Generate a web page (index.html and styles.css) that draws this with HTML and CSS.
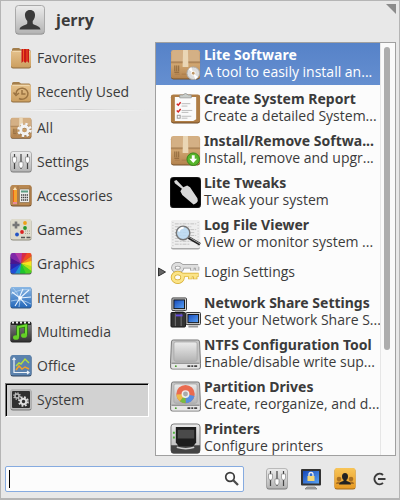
FILE: index.html
```html
<!DOCTYPE html>
<html lang="en">
<head>
<meta charset="utf-8">
<title>Applications</title>
<link rel="stylesheet" href="styles.css">
</head>
<body>
<svg class="defs" aria-hidden="true">
  <defs>
    <linearGradient id="silver" x1="0" y1="0" x2="0" y2="1"><stop offset="0" stop-color="#ececec"/><stop offset="1" stop-color="#b4b4b4"/></linearGradient>
    <linearGradient id="tan" x1="0" y1="0" x2="0" y2="1"><stop offset="0" stop-color="#e5c28d"/><stop offset="1" stop-color="#cc9f60"/></linearGradient>
    <linearGradient id="box" x1="0" y1="0" x2="0" y2="1"><stop offset="0" stop-color="#d5b083"/><stop offset=".45" stop-color="#c29461"/><stop offset=".5" stop-color="#d0a671"/><stop offset="1" stop-color="#b3824d"/></linearGradient>
    <linearGradient id="blue" x1="0" y1="0" x2="1" y2="1"><stop offset="0" stop-color="#1648b8"/><stop offset="1" stop-color="#5aa3f5"/></linearGradient>
    <linearGradient id="sky" x1="0" y1="0" x2="0" y2="1"><stop offset="0" stop-color="#8ab7e4"/><stop offset="1" stop-color="#2569bb"/></linearGradient>
    <linearGradient id="dark" x1="0" y1="0" x2="0" y2="1"><stop offset="0" stop-color="#777"/><stop offset="1" stop-color="#333"/></linearGradient>
    <linearGradient id="orange" x1="0" y1="0" x2="0" y2="1"><stop offset="0" stop-color="#f8c558"/><stop offset="1" stop-color="#e79a23"/></linearGradient>
    <symbol id="folder" viewBox="0 0 22 22">
      <path d="M2 4V2.500Q2 1 3.500 1H9l2 1.500h8q1.500 0 1.500 1.500v3H2z" fill="#a37e4c"/>
      <rect x="1" y="4" width="20" height="17.500" rx="2" fill="#8d6b3d"/>
      <rect x="1" y="3.500" width="20" height="17" rx="2" fill="url(#tan)"/>
      <path d="M2.500 4.500h17" stroke="#f0d7ac"/>
    </symbol>
    <symbol id="mixer" viewBox="0 0 22 22">
      <rect x=".5" y="1" width="21" height="20.500" rx="2.500" fill="#777"/>
      <rect x=".5" y=".5" width="21" height="20" rx="2.500" fill="url(#silver)" stroke="#999" stroke-width=".6"/>
      <path d="M4.500 3v15M11 3v15M17.500 3v15" stroke="#444" stroke-width="1.200"/>
      <path d="M2.500 6h4v4l-1 2h-2l-1-2zM9 11h4v4l-1 2h-2l-1-2zM15.500 6h4v4l-1 2h-2l-1-2z" fill="#fff" stroke="#777" stroke-width=".6"/>
    </symbol>
    <symbol id="carton" viewBox="0 0 32 32">
      <rect x="1" y="2" width="30" height="29.500" rx="2.500" fill="#74522c"/>
      <rect x="1" y="1" width="30" height="29.500" rx="2.500" fill="url(#box)"/>
      <path d="M2.500 2h27l1.500 12H1z" fill="#d4b085"/>
      <path d="M1 13.500h30" stroke="#9a7144"/>
      <path d="M13.500 1h5l.5 17.500h-6z" fill="#ead6b5"/>
      <path d="M5 17v6M7 17v6M9 17v6M4.500 24h5" stroke="#8a6338"/>
      <path d="M5 26h5M12 26h5" stroke="#aa7b49"/>
    </symbol>
    <symbol id="drive" viewBox="0 0 32 32">
      <path d="M3.500 1h25q2 0 2 2l1 22v4q0 2-2 2h-27q-2 0-2-2v-4l1-22q0-2 2-2z" fill="#c5c5c5" stroke="#777"/>
      <rect x="4" y="3" width="24" height="20" rx="2" fill="url(#silver)" stroke="#aaa"/>
      <path d="M1.500 25h29v4q0 1.500-1.500 1.500H3q-1.500 0-1.500-1.500z" fill="#e7e7e7"/>
      <path d="M1.500 25h29" stroke="#777"/>
      <path d="M18 28h3M22 28h2M25 28h3" stroke="#444" stroke-width="2"/>
      <circle cx="6" cy="28" r="1" fill="#4ca032"/>
    </symbol>
    <symbol id="gear" viewBox="0 0 16 16">
      <circle cx="8" cy="8" r="4" fill="none" stroke="currentColor" stroke-width="3"/>
      <circle cx="8" cy="8" r="6.300" fill="none" stroke="currentColor" stroke-width="3" stroke-dasharray="2.600 2.350"/>
    </symbol>
  </defs>
</svg>
<main class="menu">
  <header class="user">
    <svg class="avatar" viewBox="0 0 30 30" aria-hidden="true">
      <rect x=".5" y="1" width="29" height="28.500" rx="3" fill="#777"/>
      <rect x=".5" y=".5" width="29" height="28" rx="3" fill="url(#silver)" stroke="#aaa"/>
      <path d="M15 5c3.500 0 5.300 2.400 5 5.800-.2 2.400-1.200 4-2.300 5.300v2.200c0 2 7.300 2.200 7.800 6.200H4.500c.5-4 7.800-4.200 7.800-6.200v-2.200c-1.100-1.300-2.100-2.900-2.300-5.300-.3-3.400 1.500-5.800 5-5.800z" fill="#3b3b3b"/>
    </svg>
    <h1>jerry</h1>
    <svg class="grip" viewBox="0 0 10 10" aria-hidden="true"><path d="M0 0h10v10z" fill="#8b8b8b"/></svg>
  </header>

  <div class="panes">
    <nav class="categories" aria-label="Categories">
      <button class="category" type="button">
        <svg viewBox="0 0 22 22"><use href="#folder"/><path d="M11.500 2H19v14l-2-2-1.800 2-1.700-2-2 2z" fill="#c91717"/><path d="M13.500 2v12M17 2v12" stroke="#f05a20"/></svg>
        Favorites</button>
      <button class="category" type="button">
        <svg viewBox="0 0 22 22"><use href="#folder"/><path d="M6 13a6 5.500 0 1 1 3 4.500M3.500 11.500 6 14.500l3-2.500M12 9v4h3.500" fill="none" stroke="#9b7341" stroke-width="1.500"/></svg>
        Recently Used</button>
      <hr>
      <button class="category" type="button">
        <svg viewBox="0 0 22 22"><use href="#carton"/><use href="#gear" x="7" y="6" width="15" height="15" color="#8a6a45"/><use href="#gear" x="7" y="5.500" width="15" height="15" color="#f3f3f3"/></svg>
        All</button>
      <button class="category" type="button">
        <svg viewBox="0 0 22 22"><use href="#mixer"/></svg>
        Settings</button>
      <button class="category" type="button">
        <svg viewBox="0 0 22 22"><rect x=".5" y=".5" width="21" height="21" rx="2.500" fill="#704d28"/><rect x=".5" y="0" width="21" height="20.500" rx="2.500" fill="#b88852"/><path d="M8 1v19M20 1v19" stroke="#a07040"/><path d="M3 5l2-3 2 3v13H3z" fill="#f6a22b"/><path d="M3.500 5v12" stroke="#e5611d"/><path d="M3 17h4v2H3z" fill="#e88b99"/><path d="M3 5l2-3 2 3z" fill="#f5e2c0"/><rect x="9.500" y="4" width="10" height="13.500" rx="1" fill="#eee" stroke="#79613e" stroke-width=".6"/><path d="M11 6.500h7" stroke="#5a9d84" stroke-width="2"/><path d="M11 10h7M11 12.500h7M11 15h7" stroke="#444" stroke-width="1.300" stroke-dasharray="1.300 .6"/></svg>
        Accessories</button>
      <button class="category" type="button">
        <svg viewBox="0 0 22 22"><rect x=".5" y=".5" width="21" height="21" rx="2.500" fill="#898878"/><rect x=".5" y="0" width="21" height="20.500" rx="2.500" fill="#dddacb"/><path d="M6 2.500v7M2.500 6h7" stroke="#777" stroke-width="2.600"/><circle cx="15" cy="4" r="1.900" fill="#eda018"/><circle cx="15" cy="9" r="1.900" fill="#28982e"/><circle cx="12" cy="13" r="1.900" fill="#db2323"/><circle cx="7" cy="15.500" r="1.900" fill="#2354c4"/><path d="M11 18.500h4M16.500 18.500h4" stroke="#555" stroke-width="1.600"/><path d="M15 12h5M15 14.500h5" stroke="#a6a392" stroke-dasharray="1 1"/></svg>
        Games</button>
      <button class="category" type="button">
        <svg viewBox="0 0 22 22"><rect x=".5" y="1" width="21" height="20.500" rx="2" fill="#555"/><path d="M11 10.500V0h8z" fill="#d52c48"/><path d="M11 10.500 17 0h3q1.500 0 1.500 2v1z" fill="#f04a25"/><path d="M11 10.500 21.500 3v6z" fill="#f58a20"/><path d="M11 10.500 21.500 8v6z" fill="#f7e420"/><path d="M11 10.500 21.500 13v6z" fill="#b6e416"/><path d="M11 10.500 21.500 18q0 2.500-2 2.500H15z" fill="#4bd124"/><path d="M11 10.500 16 20.500H9z" fill="#1fc52e"/><path d="M11 10.500 10 20.500H4z" fill="#2095ce"/><path d="M11 10.500 5 20.500H2.500q-2 0-2-2V16z" fill="#214ed6"/><path d="M11 10.500.5 17v-7z" fill="#2a24af"/><path d="M11 10.500.5 11V4z" fill="#4b1590"/><path d="M11 10.500.5 5V2Q.5 0 2.500 0H6z" fill="#8028a8"/><path d="M11 10.500 5 0h7z" fill="#b43aa6"/></svg>
        Graphics</button>
      <button class="category" type="button">
        <svg viewBox="0 0 22 22"><rect x=".5" y=".5" width="21" height="21" rx="2" fill="#33567e"/><rect x=".5" y="0" width="21" height="20.500" rx="2" fill="url(#sky)"/><path d="M1 7q10-6 20-4M3 1q9 9 6 19M1 14q10-3 20 3" fill="none" stroke="#b5d4f1" stroke-width=".8"/><path d="M2 5 10 11 19 3M10 11 5 19M10 11l11-1M10 11l7 8M13 2 9 11" fill="none" stroke="#e9f4ff" stroke-width="1.100"/><circle cx="10" cy="11" r="1.800" fill="#fff"/></svg>
        Internet</button>
      <button class="category" type="button">
        <svg viewBox="0 0 22 22"><rect x=".5" y=".5" width="21" height="21" rx="2" fill="#222"/><rect x=".5" y="4" width="21" height="16.500" rx="1" fill="url(#dark)"/><path d="M2 1.500h19" stroke="#eee" stroke-width="2" stroke-dasharray="2 2"/><path d="M8 16V6l8-1.500V14" fill="none" stroke="#277d0c" stroke-width="3.500"/><path d="M8 16V6l8-1.500V14" fill="none" stroke="#6edb2e" stroke-width="2"/><ellipse cx="6" cy="16.500" rx="3" ry="2.300" fill="#64d026"/><ellipse cx="14" cy="14.500" rx="3" ry="2.300" fill="#64d026"/></svg>
        Multimedia</button>
      <button class="category" type="button">
        <svg viewBox="0 0 22 22"><rect x=".5" y=".5" width="21" height="21" rx="2.500" fill="#2e4561"/><rect x=".5" y="0" width="21" height="20.500" rx="2.500" fill="#5b82ae"/><path d="M4 3v14.500h15M2.500 5 4 3l1.500 2M17 16l2 1.500-2 1.500" fill="none" stroke="#eef3f8" stroke-width="1.200"/><path d="m6 11 3-3 2 1 4-5 4 4" fill="none" stroke="#b5dc3e" stroke-width="1.500"/><path d="m6 15 3-4 3 3 3-2 4 2" fill="none" stroke="#f2a127" stroke-width="1.500"/></svg>
        Office</button>
      <button class="category current" type="button" aria-current="true">
        <svg viewBox="0 0 22 22"><rect x=".5" y=".5" width="21" height="21" rx="2.500" fill="#777"/><rect x=".5" y="0" width="21" height="20.500" rx="2.500" fill="#b8b8b8"/><rect x="2" y="2" width="18" height="17" rx="1" fill="#303030"/><use href="#gear" x="8" y="7" width="11" height="11" color="#ddd"/><use href="#gear" x="3" y="3" width="8" height="8" color="#bbb"/></svg>
        System</button>
    </nav>

    <section class="apps" aria-label="System applications">
      <ul class="app-list">
        <li><button class="app selected" type="button">
          <svg viewBox="0 0 32 32"><use href="#carton"/><circle cx="24" cy="25" r="6.500" fill="#dedede" stroke="#aaa"/><path d="m24 25-5-4 3-2.500zM24 25l5 4-3 2.500z" fill="#fff"/><circle cx="24" cy="25" r="2" fill="#bd9565" stroke="#fff"/></svg>
          <span><b>Lite Software</b><span>A tool to easily install an...</span></span></button></li>
        <li><button class="app" type="button">
          <svg viewBox="0 0 32 32"><rect x="1" y="2" width="30" height="29.500" rx="2.500" fill="#6e4b27"/><rect x="1" y="1.500" width="30" height="29" rx="2.500" fill="#af7d45"/><path d="M5 4h22v23l-3 2H5z" fill="#fafafa"/><path d="M10 5V2h3q3-3 6 0h3v3z" fill="#c9cdc9" stroke="#888" stroke-width=".7"/><path d="m7 11 1.500 1.500L11 9.500M7 18l1.500 1.500L11 16.500" fill="none" stroke="#d52323" stroke-width="1.500"/><path d="M12 11h9M12 13.500h6M12 18h11M12 20h7M12 24h10M12 26h6" stroke="#bbb"/><rect x="7.500" y="23" width="3" height="3" fill="none" stroke="#999"/></svg>
          <span><b>Create System Report</b><span>Create a detailed System...</span></span></button></li>
        <li><button class="app" type="button">
          <svg viewBox="0 0 32 32"><use href="#carton"/><circle cx="24" cy="25" r="6.500" fill="#58b52b" stroke="#37851a"/><path d="M22.500 21h3v3.500h2.500L24 29l-4-4.500h2.500z" fill="#fff"/></svg>
          <span><b>Install/Remove Softwa...</b><span>Install, remove and upgr...</span></span></button></li>
        <li><button class="app" type="button">
          <svg viewBox="0 0 32 32"><rect width="32" height="32" rx="4" fill="#000" stroke="#555" stroke-width=".5"/><path d="M4.300 4 6.700 3.200l7 7.300 4-1.800 3 2 7.600 11.300q1 2.500-.6 4.300t-3.400 2L12.700 18.700l-2-4 1.600-2.700L5 6.500z" fill="#d8d8d8"/></svg>
          <span><b>Lite Tweaks</b><span>Tweak your system</span></span></button></li>
        <li><button class="app" type="button">
          <svg viewBox="0 0 32 32"><rect x="1" y="2" width="30" height="29.500" rx="2" fill="#aaa"/><rect x="1" y="1" width="30" height="29" rx="2" fill="#eee"/><path d="M5 5h22M5 8h17M5 11h22M5 14h20M5 17h22M5 20h18M5 23h22M5 26h16" stroke="#c2c2c2" stroke-dasharray="4 1 2 1"/><path d="M3 3v26M29 3v26" stroke="#bbb" stroke-dasharray="1 2"/><path d="m19 19 12 7" stroke="#222" stroke-width="3"/><path d="m20 19 11 6.500" stroke="#aaa"/><circle cx="13.500" cy="14.500" r="7" fill="#bbd9f2" fill-opacity=".88" stroke="#777" stroke-width="1.500"/><path d="M9 13q1-4 5-4" fill="none" stroke="#fff" stroke-width="2"/></svg>
          <span><b>Log File Viewer</b><span>View or monitor system ...</span></span></button></li>
        <li><button class="app single" type="button" aria-expanded="false">
          <svg class="expander" viewBox="0 0 8 10"><path d="M.5 1v8L7.500 5z" fill="#666" stroke="#333"/></svg>
          <svg viewBox="0 0 32 32"><g fill="none" stroke="#929292" stroke-width="4.500"><ellipse cx="8" cy="11" rx="4.500" ry="3.500"/><path d="M12 9.500h17M23 11v3M28 10v4"/></g><g fill="none" stroke="#dedede" stroke-width="3"><ellipse cx="8" cy="11" rx="4.500" ry="3.500"/><path d="M12 9.500h17M23 11v3M28 10v4"/></g><g fill="none" stroke="#d5aa28" stroke-width="4.500"><ellipse cx="8" cy="21" rx="5" ry="4.500"/><path d="M12.500 18.500h17M21 19v4M26 19v4"/></g><g fill="none" stroke="#fbe488" stroke-width="3"><ellipse cx="8" cy="21" rx="5" ry="4.500"/><path d="M12.500 18.500h16.500M21 19v3.500M26 19v3.500"/></g></svg>
          <span><span>Login Settings</span></span></button></li>
        <li><button class="app" type="button">
          <svg viewBox="0 0 32 32"><rect x="2" y="1" width="15" height="13" rx="1" fill="#d9d9d9" stroke="#333"/><rect x="4" y="3" width="11" height="9" fill="url(#blue)" stroke="#111"/><path d="M5 15h9" stroke="#999" stroke-width="2"/><rect x="1" y="16" width="15" height="15" rx="1" fill="#333" stroke="#161616"/><path d="M5.500 17v13M11.500 17v13" stroke="#777"/><path d="M6 19h7" stroke="#674ae2" stroke-width="2"/><rect x="16.500" y="16" width="15" height="12.500" rx="1" fill="#d9d9d9" stroke="#333"/><rect x="18.500" y="18" width="11" height="8.500" fill="url(#blue)" stroke="#111"/><path d="M19 30.500h10" stroke="#999" stroke-width="2"/></svg>
          <span><b>Network Share Settings</b><span>Set your Network Share S...</span></span></button></li>
        <li><button class="app" type="button">
          <svg viewBox="0 0 32 32"><use href="#drive"/></svg>
          <span><b>NTFS Configuration Tool</b><span>Enable/disable write sup...</span></span></button></li>
        <li><button class="app" type="button">
          <svg viewBox="0 0 32 32"><use href="#drive"/><circle cx="16" cy="13.500" r="9.500" fill="#e96b50"/><path d="M16 13.500 25.300 15.500A9.500 9.500 0 0 1 16 23z" fill="#568ee2"/><path d="M16 13.500V23a9.500 9.500 0 0 1-6-2.200z" fill="#75bf43"/><path d="M16 13.500 10 20.800A9.500 9.500 0 0 1 6.500 14z" fill="#edbb49"/><circle cx="16" cy="13.500" r="3.300" fill="#aaa" stroke="#eee" stroke-width="1.500"/></svg>
          <span><b>Partition Drives</b><span>Create, reorganize, and d...</span></span></button></li>
        <li><button class="app" type="button">
          <svg viewBox="0 0 32 32"><rect x="1" y="1" width="30" height="30" rx="3" fill="url(#silver)" stroke="#777"/><path d="M1 23h30v6q0 2.500-2 2.500H3q-2 0-2-2.500z" fill="#444"/><path d="M6 4h21v16l-3 4H9l-3-4z" fill="#1d1d1d"/><path d="M8 7h17v9H8z" fill="#4a4a4a"/><path d="M7 25q9.500 3 18 0" fill="none" stroke="#ccc" stroke-width="1.500"/><path d="M3 10h2M3 15h2" stroke="#4eb33b" stroke-width="2"/></svg>
          <span><b>Printers</b><span>Configure printers</span></span></button></li>
      </ul>
      <div class="scrollbar" aria-hidden="true"><div class="thumb"></div></div>
    </section>
  </div>

  <footer class="bottom">
    <label class="search">
      <input type="text" aria-label="Search applications" autofocus>
      <svg viewBox="0 0 16 16" aria-hidden="true"><circle cx="6" cy="6" r="4.300" fill="none" stroke="#3b3b3b" stroke-width="1.700"/><path d="m9 9 5 5" stroke="#4b4b4b" stroke-width="2.300"/></svg>
    </label>
    <div class="actions">
      <button type="button" aria-label="All settings"><svg viewBox="0 0 22 22"><use href="#mixer"/></svg></button>
      <button type="button" aria-label="Lock screen"><svg viewBox="0 0 22 22"><path d="M7 19h8l2 2H5z" fill="#aaa" stroke="#777" stroke-width=".7"/><rect x="1" y="1" width="20" height="16.500" rx="1" fill="#333"/><rect x="3" y="3" width="16" height="12.500" fill="url(#blue)"/><path d="M9 8V6.500a2 2 0 0 1 4 0V8" fill="none" stroke="#eee" stroke-width="1.300"/><rect x="7.500" y="8" width="7" height="5" fill="#f3d675"/></svg></button>
      <button type="button" aria-label="Switch users"><svg viewBox="0 0 22 22"><rect x=".5" y=".5" width="21" height="21" rx="2.500" fill="#a56c1c"/><rect x=".5" y="0" width="21" height="20.500" rx="2.500" fill="url(#orange)"/><g fill="#a96f22"><circle cx="5" cy="11" r="2.300"/><path d="M2 16q0-2.500 3-2.500T8 16z"/><circle cx="17" cy="11" r="2.300"/><path d="M14 16q0-2.500 3-2.500t3 2.500z"/></g><ellipse cx="11" cy="8.500" rx="3" ry="3.500" fill="#222"/><path d="M9.500 11h3v2q4 .5 4.500 3.500H5q.5-3 4.500-3.500z" fill="#222"/></svg></button>
      <button type="button" aria-label="Log out"><svg viewBox="0 0 22 22"><path d="M15 7a5.200 5.200 0 1 0 0 8" fill="none" stroke="#3b3b3b" stroke-width="2"/><path d="M10 11h7.500" stroke="#3b3b3b" stroke-width="2"/></svg></button>
    </div>
  </footer>
</main>
</body>
</html>
```
FILE: styles.css
```css
* { box-sizing: border-box; }

body {
  margin: 0;
  background: #e8e8e8;
  color: #3b3b3b;
  font: 14px/17px "Open Sans", "Noto Sans", sans-serif;
}

button {
  border: 0;
  padding: 0;
  background: none;
  color: inherit;
  font: inherit;
  text-align: left;
}

svg { display: block; flex: none; }

.defs { position: absolute; width: 0; height: 0; }

.menu {
  display: flex;
  flex-direction: column;
  height: 100vh;
  border: 1px solid #b5b5b5;
  border-bottom-width: 2px;
  padding: 3px 3px 6px 4px;
}

.user {
  display: flex;
  align-items: center;
  gap: 11px;
  height: 37px;
  padding: 0 0 5px 10px;
}

.avatar { width: 30px; height: 30px; }

h1 {
  flex: 1;
  margin: 0;
  font-size: 16px;
  line-height: 22px;
}

.grip { width: 10px; height: 10px; align-self: flex-start; }

.panes {
  display: flex;
  flex: 1;
  min-height: 0;
  gap: 6px;
}

.categories { flex: 0 0 144px; }

.category {
  display: flex;
  align-items: center;
  gap: 5px;
  width: 100%;
  height: 34px;
  padding: 0 0 2px 5px;
  border: 0 solid;
}

.category svg { width: 22px; height: 22px; margin-top: 2px; }

.category.current {
  padding-left: 4px;
  border-width: 1px;
  border-color: #777 #fff #fff #777;
  background: #d2d2d2;
  box-shadow: inset 1px 1px #000;
}

hr {
  height: 2px;
  margin: 0;
  border: 0;
  background: linear-gradient(90deg, transparent, #cfcfcf, transparent) top / 100% 1px no-repeat, linear-gradient(90deg, transparent, #fff, transparent);
}

.apps {
  display: flex;
  flex: 1;
  min-width: 0;
  margin-top: 1px;
  border: 1px solid #a0a0a0;
  background: #fcfcfc;
}

.app-list {
  flex: 1;
  min-width: 0;
  margin: 0;
  padding: 0;
  overflow: hidden;
  list-style: none;
}

.app {
  display: flex;
  align-items: center;
  gap: 3px;
  width: 100%;
  height: 42px;
  padding-left: 14px;
  white-space: nowrap;
}

.app svg { width: 31px; height: 31px; }

.app > span { padding-bottom: 2px; }

.app b { font-family: "Noto Sans", "Open Sans", sans-serif; }

.app > span,
.app b,
.app span span { display: block; }

.app.selected {
  margin-bottom: 2px;
  background: linear-gradient(#5682c8, #658fd0);
  color: #fff;
}

.app.single {
  height: 34px;
  margin-bottom: 2px;
  padding-left: 1px;
}

.app .expander { width: 10px; height: 10px; }

.scrollbar {
  flex: 0 0 15px;
  padding: 4px 5px 4px 3px;
  border-left: 1px solid #e6e6e6;
  background: #fafafa;
}

.thumb {
  height: 75%;
  border-radius: 4px;
  background: #adadad;
}

.bottom {
  display: flex;
  align-items: center;
  justify-content: space-between;
  gap: 22px;
  padding-top: 10px;
}

.search {
  display: flex;
  align-items: center;
  flex: 1;
  height: 26px;
  padding: 0 3px;
  border: 1px solid #86abe0;
  border-radius: 2px;
  background: #fcfcfc;
}

.search input {
  flex: 1;
  min-width: 0;
  height: 18px;
  padding: 0;
  border: 0;
  border-left: 1px solid #000;
  outline: 0;
  background: none;
  color: inherit;
  font: inherit;
  caret-color: transparent;
}

.search svg { width: 16px; height: 16px; }

.actions { display: flex; gap: 12px; padding-right: 6px; }

.actions svg { width: 22px; height: 22px; }
```
